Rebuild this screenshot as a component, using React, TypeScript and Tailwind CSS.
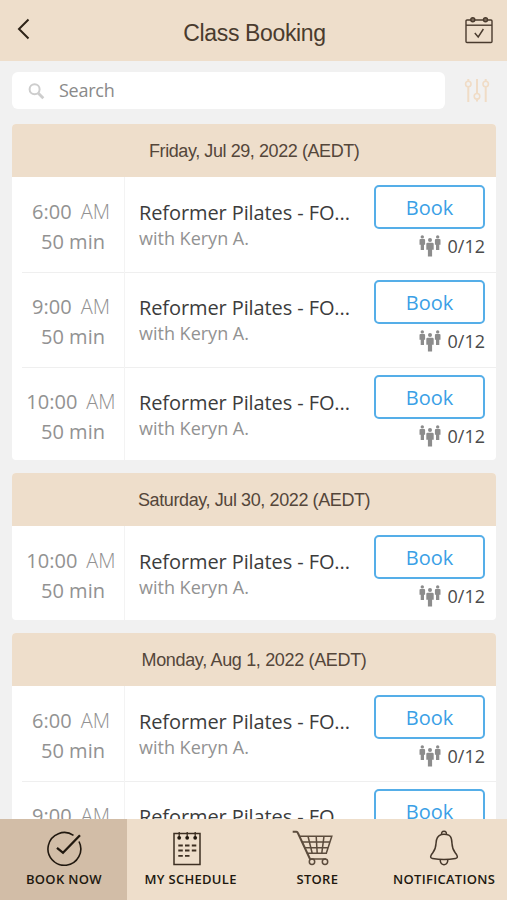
import React from 'react';

interface ClassSlot {
  time: string;
  duration: string;
  title: string;
  teacher: string;
  spots: string;
}

interface Day {
  label: string;
  labelClass: string;
  slots: ClassSlot[];
}

const slot = (time: string): ClassSlot => ({
  time,
  duration: '50 min',
  title: 'Reformer Pilates - FO...',
  teacher: 'with Keryn A.',
  spots: '0/12'
});

const days: Day[] = [
  { label: 'Friday, Jul 29, 2022 (AEDT)', labelClass: 'w-[210px] tracking-[-0.42px]', slots: [slot('6:00'), slot('9:00'), slot('10:00')] },
  { label: 'Saturday, Jul 30, 2022 (AEDT)', labelClass: 'w-[232px] tracking-[-0.4px]', slots: [slot('10:00')] },
  { label: 'Monday, Aug 1, 2022 (AEDT)', labelClass: 'w-[225px] tracking-[-0.34px]', slots: [slot('6:00'), slot('9:00')] }
];

const CalendarIcon = () => (
  <svg className="w-[28px] h-[28px] -mt-[2px]" viewBox="0 0 28 28" fill="none" stroke="#4a3b2e" strokeWidth="1.4">
    <rect x="1" y="4" width="26" height="22.5" rx="1" />
    <path d="M1 9.2h26" />
    <path d="M9.8 17l3.4 4 5.2-8" />
    <circle cx="7.8" cy="3.8" r="2" fill="#7a6a5b" />
    <circle cx="20.5" cy="3.8" r="2" fill="#7a6a5b" />
  </svg>
);

const FilterIcon = () => (
  <svg className="w-[26px] h-[26px]" viewBox="0 0 26 26" fill="none" stroke="#f0dcc6" strokeWidth="2">
    <path d="M4.3 1v2M4.3 9v15M13 1v14M13 21.5v2M21.7 1v2M21.7 9v15" />
    <circle cx="4.3" cy="6" r="2.7" strokeWidth="1.6" />
    <circle cx="13" cy="18.3" r="2.8" strokeWidth="1.6" />
    <circle cx="21.7" cy="6" r="2.7" strokeWidth="1.6" />
  </svg>
);

const PeopleIcon = () => (
  <svg className="w-[22px] h-[22px]" viewBox="0 0 22 22" fill="#8c8c8c">
    <circle cx="3.3" cy="1.9" r="1.7" />
    <path d="M1.5 4.1h3.6q1 0 1 1v4.6H5V15H1.7V9.7H.5V5.1q0-1 1-1z" />
    <circle cx="18.7" cy="1.9" r="1.7" />
    <path d="M16.9 4.1h3.6q1 0 1 1v4.6h-1.2V15H17V9.7h-1.1V5.1q0-1 1-1z" />
    <circle cx="11" cy="5.1" r="2" />
    <path d="M8.5 7.8h5q1.2 0 1.2 1.2v5.7h-1.6V21.6H8.9v-6.9H7.3V9q0-1.2 1.2-1.2z" />
  </svg>
);

const BookIcon = () => (
  <svg className="w-[36px] h-[36px] ml-px" viewBox="0 0 36 36" fill="none" stroke="#21180f">
    <path d="M27.5 5.3A16.4 16.4 0 1 0 33 11.5" strokeWidth="1.6" />
    <path d="M11 17.8l6 5L34 5.3" strokeWidth="2.3" />
  </svg>
);

const ScheduleIcon = () => (
  <svg className="w-[36px] h-[36px] mr-[7px]" viewBox="0 0 36 36" fill="none" stroke="#3d2f22">
    <rect x="5" y="3.5" width="26" height="31" strokeWidth="1.5" />
    <path d="M10.2 2v6M18.2 2v6M26.2 2v6" strokeWidth="1.3" />
    <g fill="#21180f" stroke="none">
      <circle cx="10.2" cy="7.8" r="1.9" />
      <circle cx="18.2" cy="7.8" r="1.9" />
      <circle cx="26.2" cy="7.8" r="1.9" />
    </g>
    <path d="M9.3 15.5h4.5M16 15.5h4.5M22.8 15.5h4.5M9.3 20.5h4.5M16 20.5h4.5M22.8 20.5h4.5M9.3 25.8h4.5M16 25.8h4.5" strokeWidth="1.8" />
  </svg>
);

const CartIcon = () => (
  <svg className="w-[42px] h-[36px] mr-[8px]" viewBox="0 0 42 36" fill="none" stroke="#5c4c3d" strokeWidth="1.5">
    <path d="M.7 1.8h3.7q1 0 1.5 1.2L18 29" strokeWidth="2" />
    <path d="M7.5 6.2h32.3l-5.5 17H14.8M9.9 12h28M12.3 17.8h23.6M16 6.2l4.2 17M24.2 6.2l1 17M32 6.2l-2.2 17" />
    <path d="M17 29h17" />
    <circle cx="20" cy="31.7" r="2.7" />
    <circle cx="33" cy="31.7" r="2.7" />
  </svg>
);

const BellIcon = () => (
  <svg className="w-[30px] h-[36px]" viewBox="0 0 30 36" fill="none" stroke="#46382b" strokeWidth="1.5">
    <path d="M12.6 4.7Q12.2 1.3 15 1.3t2.4 3.4" />
    <path d="M12.5 4.5Q7.2 6 7 13.5C6.7 21 4 22 2.3 24.8q-1.8 3.2 1.2 3.6 11.5 2 23 0 3-.4 1.2-3.6C26 22 23.3 21 23 13.5 22.8 6 20.5 4.9 17.5 4.5Q15 3.8 12.5 4.5" />
    <path d="M11.3 29.5v1.7q.7 3.5 3.7 3.5t3.7-3.5v-1.7" />
  </svg>
);

const tabs = [
  { label: 'BOOK NOW', icon: <BookIcon />, active: true },
  { label: 'MY SCHEDULE', icon: <ScheduleIcon />, active: false },
  { label: 'STORE', icon: <CartIcon />, active: false },
  { label: 'NOTIFICATIONS', icon: <BellIcon />, active: false }
];

const SlotRow: React.FC<{ item: ClassSlot; divided: boolean }> = ({ item, divided }) => (
  <div className="h-[94.7px] last:h-[93.9px] flex shrink-0 pl-[10px]">
    <div className={`flex flex-1 ${divided ? 'shadow-[inset_0_1px_#efefef]' : ''}`}>
      <div className="w-[103px] h-full border-r border-[#f3f3f3] pt-5 text-center text-[20px] leading-[30px] text-[#929292]">
        <div className="flex justify-center gap-[9px] pr-[4px]">
          <span>{item.time}</span>
          <span className="font-light">AM</span>
        </div>
        <div>{item.duration}</div>
      </div>
      <div className="flex-1 pl-[14px] pt-[22px] whitespace-nowrap">
        <div className="text-[20px] leading-[27px] tracking-[-0.1px] text-[#3c3c3c]">{item.title}</div>
        <div className="text-[18px] leading-[24px] text-[#929292]">{item.teacher}</div>
      </div>
      <div className="w-[111px] mr-[11px] pt-[8.3px]">
        <button className="w-full h-[44px] block border-2 border-[#55aee8] rounded-[5px] text-[20px] leading-[41px] text-[#3b9fe6]">
          Book
        </button>
        <div className="flex justify-end items-center gap-[7px] h-[24px] mt-[5px]">
          <PeopleIcon />
          <span className="text-[18px] leading-[24px] text-[#4a4a4a]">{item.spots}</span>
        </div>
      </div>
    </div>
  </div>
);

const App: React.FC = () => {
  return (
    <div className="w-[507px] h-[900px] overflow-hidden flex flex-col bg-[#f1f1f1] font-['Open_Sans',sans-serif]">
      <header className="h-[61px] shrink-0 flex items-center justify-between bg-[#eedecb] pl-[17px] pr-[14px] font-['Liberation_Sans',sans-serif]">
        <button className="w-[27px]">
          <svg className="w-[13px] h-[22px] -mt-1" viewBox="0 0 13 22" fill="none" stroke="#2e2318" strokeWidth="2">
            <path d="M11.5 1.5L2 11l9.5 9.5" />
          </svg>
        </button>
        <h1 className="text-[23px] leading-[30px] pt-[4px] tracking-[-0.35px] text-[#4a3b2e]">Class Booking</h1>
        <CalendarIcon />
      </header>

      <div className="h-[62.5px] shrink-0 flex items-start pt-[11px] pl-3 pr-[17px] justify-between">
        <div className="w-[433px] h-[36.5px] rounded-[6px] bg-white flex items-center pl-4">
          <svg className="w-[17px] h-[17px] mt-[2px]" viewBox="0 0 17 17" fill="none" stroke="#cdcdcd">
            <circle cx="6.6" cy="6.3" r="5" strokeWidth="2" />
            <path d="M10.3 10.2l5 5" strokeWidth="2.8" />
          </svg>
          <span className="ml-[14px] text-[18px] leading-[24px] tracking-[-0.25px] text-[#8a8a8a]">Search</span>
        </div>
        <div className="pt-[6px]">
          <FilterIcon />
        </div>
      </div>

      <main className="flex-1 min-h-0 overflow-hidden pl-3 pr-[11px] flex flex-col gap-[12.3px]">
        {days.map(day => (
          <section key={day.label} className="bg-white rounded-[4px] overflow-hidden shrink-0">
            <div className="h-[53.7px] pt-[2px] flex items-center justify-center bg-[#eedecb] text-[18px] text-[#54463a] font-['Liberation_Sans',sans-serif]">
              <span className={`${day.labelClass} whitespace-nowrap`}>{day.label}</span>
            </div>
            {day.slots.map((item, i) => (
              <SlotRow key={i} item={item} divided={i > 0} />
            ))}
          </section>
        ))}
      </main>

      <nav className="h-[81px] shrink-0 grid grid-cols-4 bg-[#eedecb]">
        {tabs.map(tab => (
          <div
            key={tab.label}
            className={`flex flex-col items-center pt-[11px] ${tab.active ? 'bg-[#d2bda7]' : ''}`}
          >
            {tab.icon}
            <span className="mt-[4px] pl-px text-[13px] leading-[18px] tracking-[0.3px] font-semibold text-[#21180f] whitespace-nowrap">{tab.label}</span>
          </div>
        ))}
      </nav>
    </div>
  );
};

export default App;
